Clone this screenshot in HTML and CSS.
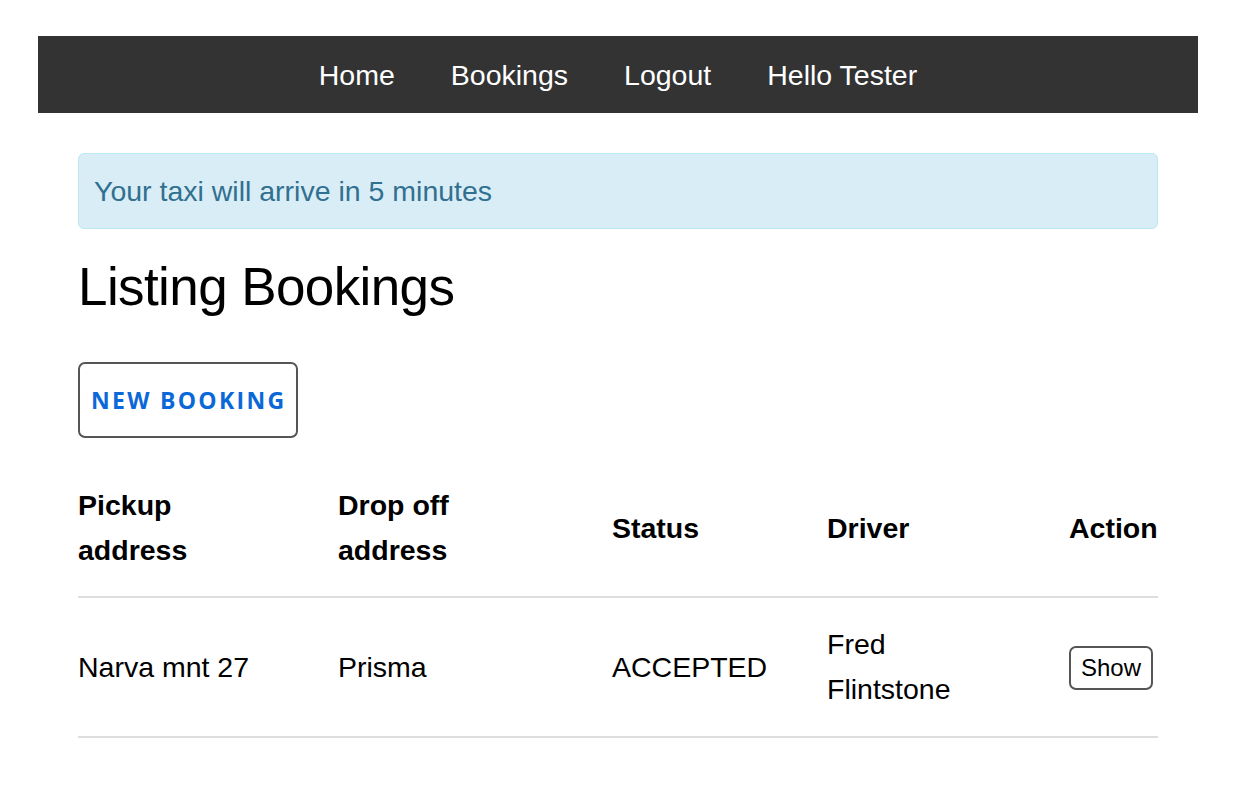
FILE: index.html
```html
<!DOCTYPE html>
<html lang="en">
<head>
<meta charset="utf-8">
<title>Listing Bookings</title>
<link rel="stylesheet" href="styles.css">
</head>
<body>
<div class="page">
  <nav class="topnav">
    <a class="navlink" href="#">Home</a>
    <a class="navlink" href="#">Bookings</a>
    <a class="navlink" href="#">Logout</a>
    <span class="navlink">Hello Tester</span>
  </nav>
  <main class="content">
    <div class="alert">Your taxi will arrive in 5 minutes</div>
    <h1 class="title">Listing Bookings</h1>
    <a class="btn-new" href="#">New Booking</a>
    <table class="bookings">
      <colgroup>
        <col class="c1"><col class="c2"><col class="c3"><col class="c4"><col class="c5">
      </colgroup>
      <thead>
        <tr>
          <th>Pickup address</th>
          <th>Drop off address</th>
          <th>Status</th>
          <th>Driver</th>
          <th class="last">Action</th>
        </tr>
      </thead>
      <tbody>
        <tr>
          <td>Narva mnt 27</td>
          <td>Prisma</td>
          <td>ACCEPTED</td>
          <td>Fred Flintstone</td>
          <td class="last"><button class="btn-show" type="button">Show</button></td>
        </tr>
      </tbody>
    </table>
  </main>
</div>
</body>
</html>
```
FILE: styles.css
```css
html, body {
  margin: 0;
  padding: 0;
  background: #fff;
}
body {
  font-family: "Liberation Sans", Arial, sans-serif;
  font-size: 28.5px;
  color: #000;
}
.page {
  width: 1160px;
  margin: 36px 0 0 38px;
}
.topnav {
  background: #333333;
  height: 77px;
  display: flex;
  justify-content: center;
  align-items: center;
}
.navlink {
  color: #fff;
  text-decoration: none;
  font-size: 28.5px;
  padding: 0 28px;
  line-height: 40px;
}
.content {
  padding: 40px 40px 40px 40px;
}
.alert {
  background: #d9edf7;
  border: 1px solid #bce8f1;
  border-radius: 6px;
  color: #31708f;
  padding: 15px 15px;
  line-height: 44px;
  font-size: 28.5px;
}
.title {
  font-size: 53px;
  font-weight: normal;
  letter-spacing: -0.6px;
  line-height: 57px;
  margin: 29px 0 47px 0;
}
.btn-new {
  display: inline-block;
  box-sizing: border-box;
  height: 76px;
  line-height: 72px;
  padding: 0 10px 0 11px;
  border: 2px solid #555;
  border-radius: 7px;
  color: #0b68d8;
  text-decoration: none;
  text-transform: uppercase;
  font-family: "Open Sans", sans-serif;
  font-weight: 700;
  font-size: 23px;
  letter-spacing: 2.3px;
}
.bookings {
  width: 1080px;
  margin-top: 22px;
  border-collapse: collapse;
  table-layout: fixed;
}
.c1 { width: 260px; }
.c2 { width: 274px; }
.c3 { width: 215px; }
.c4 { width: 242px; }
.c5 { width: 89px; }
.bookings th,
.bookings td {
  text-align: left;
  vertical-align: middle;
  padding: 23px 70px 23px 0;
  line-height: 45px;
}
.bookings th {
  font-weight: 700;
  border-bottom: 2px solid #ddd;
}
.bookings td {
  padding-top: 24px;
  padding-bottom: 24px;
  border-bottom: 2px solid #ddd;
}
.bookings .last {
  padding-right: 0;
}
.btn-show {
  font-family: "Liberation Sans", Arial, sans-serif;
  font-size: 24px;
  color: #000;
  background: #fff;
  border: 2px solid #555;
  border-radius: 7px;
  padding: 4px 10px;
  line-height: 32px;
  cursor: pointer;
}
```
